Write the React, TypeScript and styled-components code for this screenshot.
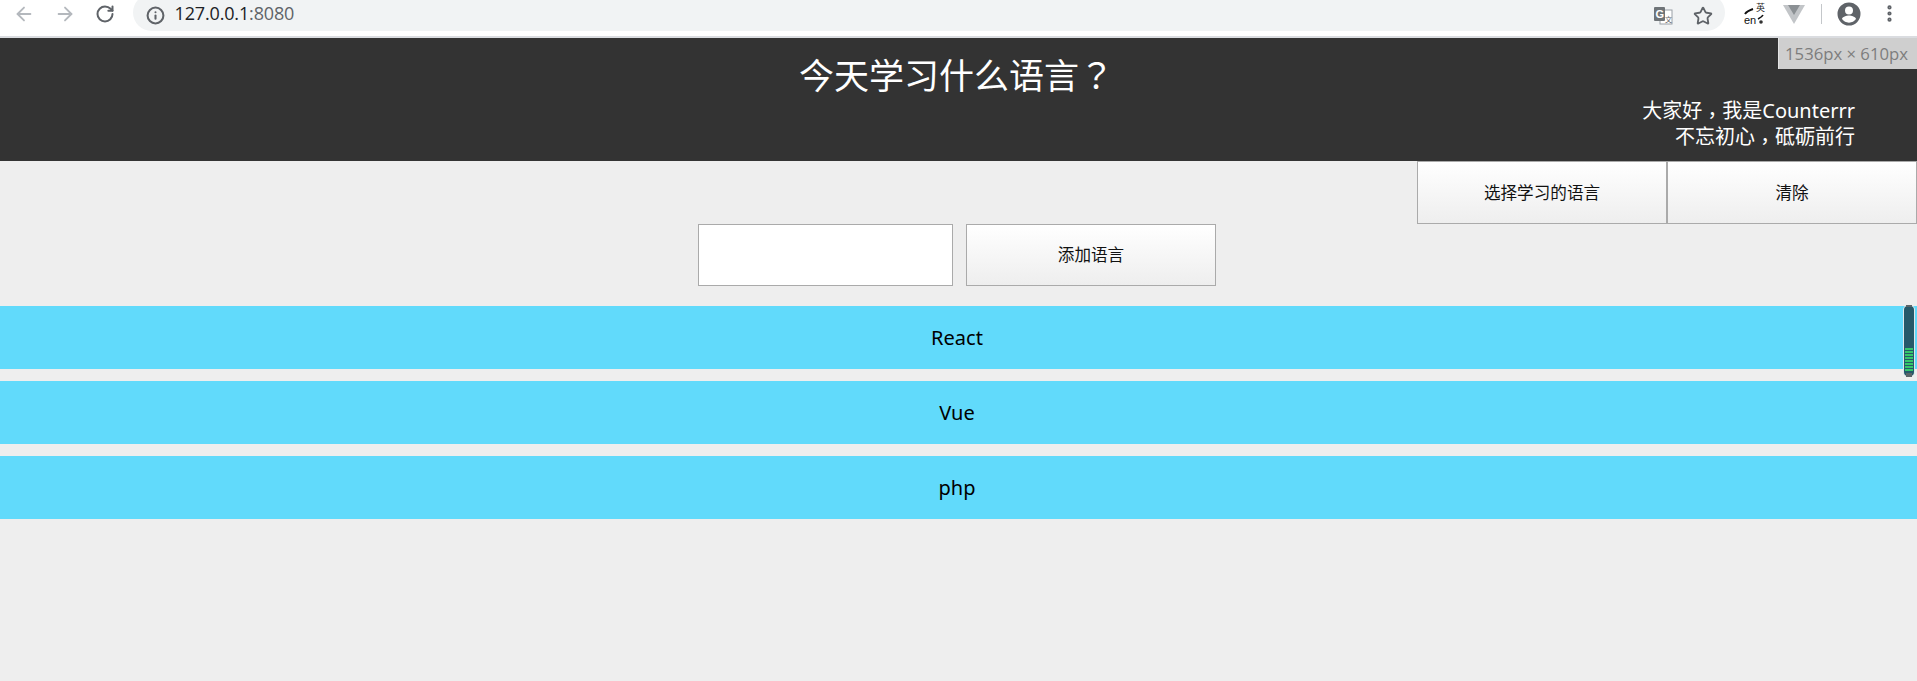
import styled, { createGlobalStyle } from "styled-components";
import { ArrowLeft, ArrowRight, Info, MoreVertical, RotateCw, Star } from "lucide-react";

const GlobalStyle = createGlobalStyle`
    html, body {
        margin: 0;
        height: 681px;
        overflow: hidden;
        background: #eee;
        font-family: "Noto Sans", "Noto Sans CJK SC", sans-serif;
    }
`;

const Page = styled.div`
    position: relative;
    width: 1917px;
    height: 681px;
    overflow: hidden;
`;

const Toolbar = styled.div`
    display: flex;
    align-items: flex-start;
    height: 36px;
    padding-left: 4px;
    background: #fff;
    border-bottom: 2px solid #dadce0;
    overflow: hidden;
`;

const NavButton = styled.div<{ $color?: string }>`
    flex: none;
    display: flex;
    align-items: center;
    justify-content: center;
    width: 40.5px;
    height: 27px;
    color: ${(p) => p.$color || "#5f6368"};
`;

const Omnibox = styled.div`
    flex: 1;
    display: flex;
    align-items: center;
    height: 37px;
    margin: -6px 0 0 7px;
    padding: 6px 2px 0 13px;
    box-sizing: border-box;
    background: #f1f3f4;
    border-radius: 19px;
`;

const Url = styled.div`
    flex: 1;
    margin: -5px 0 0 10px;
    font-family: "Open Sans", sans-serif;
    font-size: 18px;
    letter-spacing: -0.15px;
    color: #202124;

    span {
        color: #5f6368;
    }
`;

const Extensions = styled.div`
    flex: none;
    display: flex;
    align-items: flex-start;
    margin-left: 9px;
    padding-right: 8px;
`;

const Separator = styled.div`
    width: 1px;
    height: 20px;
    margin: 4px 7px 0;
    background: #c4c7ca;
`;

const ExtIcon = styled.div`
    position: relative;
    width: 40px;
    height: 27px;
    display: flex;
    align-items: center;
    justify-content: center;
`;

const EnLabel = styled.span`
    position: absolute;
    left: 10px;
    bottom: 2px;
    font-family: "Liberation Sans", sans-serif;
    font-size: 11px;
    line-height: 10px;
    color: #111;
`;

const ZhLabel = styled.span`
    position: absolute;
    right: 9px;
    top: 3px;
    font-family: "Noto Sans CJK SC", sans-serif;
    font-size: 9px;
    line-height: 9px;
    color: #222;
`;

const SizeBadge = styled.div`
    position: absolute;
    top: 38px;
    right: 0;
    width: 139px;
    height: 31px;
    box-sizing: border-box;
    border-left: 1px solid #e4e4e4;
    background: #cfcfcf;
    color: #7d7d7d;
    font-family: "Open Sans", sans-serif;
    font-size: 16.7px;
    line-height: 31px;
    padding-right: 3px;
    text-align: center;
`;

const Header = styled.header`
    height: 123px;
    box-sizing: border-box;
    padding-top: 14px;
    background: #333;
    color: #fff;
`;

const Title = styled.h1`
    margin: 0;
    padding-right: 4px;
    font-size: 35px;
    font-weight: 400;
    line-height: 48px;
    text-align: center;
`;

// the reference centres full-width punctuation in its cell
const Punct = styled.span<{ $drop?: number }>`
    font-family: "Noto Sans CJK TC", sans-serif;
    line-height: 0;
    vertical-align: ${(p) => -(p.$drop || 0)}px;
`;

const Intro = styled.div`
    margin-top: -2px;
    padding-right: 62px;
    font-size: 20px;
    line-height: 26px;
    text-align: right;
`;

const Button = styled.button<{ $width: number; $height: number }>`
    width: ${(p) => p.$width}px;
    height: ${(p) => p.$height}px;
    padding: 0 0 2px;
    border: 1px solid #aaa;
    background: linear-gradient(#fff, #eee);
    color: #111;
    font-family: "Noto Sans CJK SC", sans-serif;
    font-size: 16.6px;
`;

const Actions = styled.div`
    display: flex;
    justify-content: flex-end;
`;

const AddRow = styled.div`
    display: flex;
    justify-content: center;
    gap: 13px;
    padding-right: 3px;
`;

const LangInput = styled.input`
    width: 255px;
    height: 62px;
    padding: 0;
    box-sizing: border-box;
    border: 1px solid #aaa;
    background: #fff;
`;

const List = styled.ul`
    display: flex;
    flex-direction: column;
    gap: 12px;
    margin: 20px 0 0;
    padding: 0;
    list-style: none;
`;

const Item = styled.li`
    height: 63px;
    padding-right: 3px;
    background: #61dafb;
    color: #000;
    font-size: 20px;
    line-height: 63px;
    text-align: center;
`;

const Meter = styled.div`
    position: absolute;
    top: 306px;
    right: 3px;
    display: flex;
    flex-direction: column;
    justify-content: flex-end;
    gap: 1px;
    width: 10px;
    height: 70px;
    box-sizing: border-box;
    padding: 0 1px 5px;
    background: #26596a;
    border-radius: 4px;
    box-shadow: 0 0 0 1px #dfe8ec;

    &::before,
    &::after {
        content: "";
        position: absolute;
        left: 2px;
        width: 6px;
        height: 2px;
        background: #5a6468;
    }

    &::before {
        top: -1px;
    }

    &::after {
        bottom: -1px;
        height: 4px;
    }
`;

const MeterBar = styled.div`
    flex: none;
    height: 2px;
    background: #35c76b;
`;

const languages = ["React", "Vue", "php"];

const App = () => (
    <Page>
        <GlobalStyle />
        <Toolbar>
            <NavButton $color="#b4b8bd">
                <ArrowLeft size={22} strokeWidth={2} />
            </NavButton>
            <NavButton $color="#b4b8bd">
                <ArrowRight size={22} strokeWidth={2} />
            </NavButton>
            <NavButton>
                <RotateCw size={20} strokeWidth={2.4} />
            </NavButton>
            <Omnibox>
                <Info size={19} strokeWidth={2.6} color="#5f6368" />
                <Url>
                    127.0.0.1<span>:8080</span>
                </Url>
                <ExtIcon>
                    <svg width="20" height="20" viewBox="0 0 20 20">
                        <rect x="7" y="4" width="12" height="14" fill="#fff" stroke="#9aa0a6" />
                        <rect x="1" y="1" width="11" height="14" rx="1" fill="#6f7478" />
                        <text x="2.500" y="12" fontSize="11" fontWeight="700" fontFamily="Liberation Sans" fill="#fff">
                            G
                        </text>
                        <text x="12" y="16" fontSize="7" fontFamily="Noto Sans CJK SC" fill="#5f6368">
                            文
                        </text>
                    </svg>
                </ExtIcon>
                <ExtIcon>
                    <Star size={20} strokeWidth={2.2} color="#5f6368" />
                </ExtIcon>
            </Omnibox>
            <Extensions>
                <ExtIcon>
                    <EnLabel>en</EnLabel>
                    <ZhLabel>英</ZhLabel>
                    <svg width="24" height="24" viewBox="0 0 24 24">
                        <path d="M3 12c2-3 5-4 8-5" fill="none" stroke="#111" strokeWidth="2" />
                        <path d="M21 13c-1 2-3 3-5 4" fill="none" stroke="#111" strokeWidth="1.6" />
                        <circle cx="19" cy="20" r="1.8" fill="#333" />
                    </svg>
                </ExtIcon>
                <ExtIcon>
                    <svg width="22" height="20" viewBox="0 0 22 20">
                        <polygon points="0,1 22,1 11,20" fill="#c2c5c8" />
                        <polygon points="5,1 17,1 11,11" fill="#8b9094" />
                    </svg>
                </ExtIcon>
                <Separator />
                <ExtIcon>
                    <svg width="24" height="24" viewBox="0 0 24 24">
                        <path
                            fill="#5f6368"
                            d="M12 .5a11.500 11.500 0 1 0 0 23 11.500 11.500 0 0 0 0-23zm0 4a4 4 0 1 1 0 8 4 4 0 0 1 0-8zm0 16.200a8.700 8.700 0 0 1-7-3.600c.1-2.300 4.700-3.600 7-3.600s6.900 1.300 7 3.600a8.700 8.700 0 0 1-7 3.600z"
                        />
                    </svg>
                </ExtIcon>
                <ExtIcon>
                    <MoreVertical size={21} strokeWidth={2.8} color="#5f6368" />
                </ExtIcon>
            </Extensions>
        </Toolbar>
        <SizeBadge>1536px × 610px</SizeBadge>
        <Header>
            <Title>
                今天学习什么语言<Punct>？</Punct>
            </Title>
            <Intro>
                <div>
                    大家好<Punct $drop={5}>，</Punct>我是Counterrr
                </div>
                <div>
                    不忘初心<Punct $drop={5}>，</Punct>砥砺前行
                </div>
            </Intro>
        </Header>
        <Actions>
            <Button $width={250} $height={63}>选择学习的语言</Button>
            <Button $width={250} $height={63}>清除</Button>
        </Actions>
        <AddRow>
            <LangInput />
            <Button $width={250} $height={62}>添加语言</Button>
        </AddRow>
        <List>
            {languages.map((lang) => (
                <Item key={lang}>{lang}</Item>
            ))}
        </List>
        <Meter>
            {Array.from({ length: 8 }, (_, i) => (
                <MeterBar key={i} />
            ))}
        </Meter>
    </Page>
);

export default App;
